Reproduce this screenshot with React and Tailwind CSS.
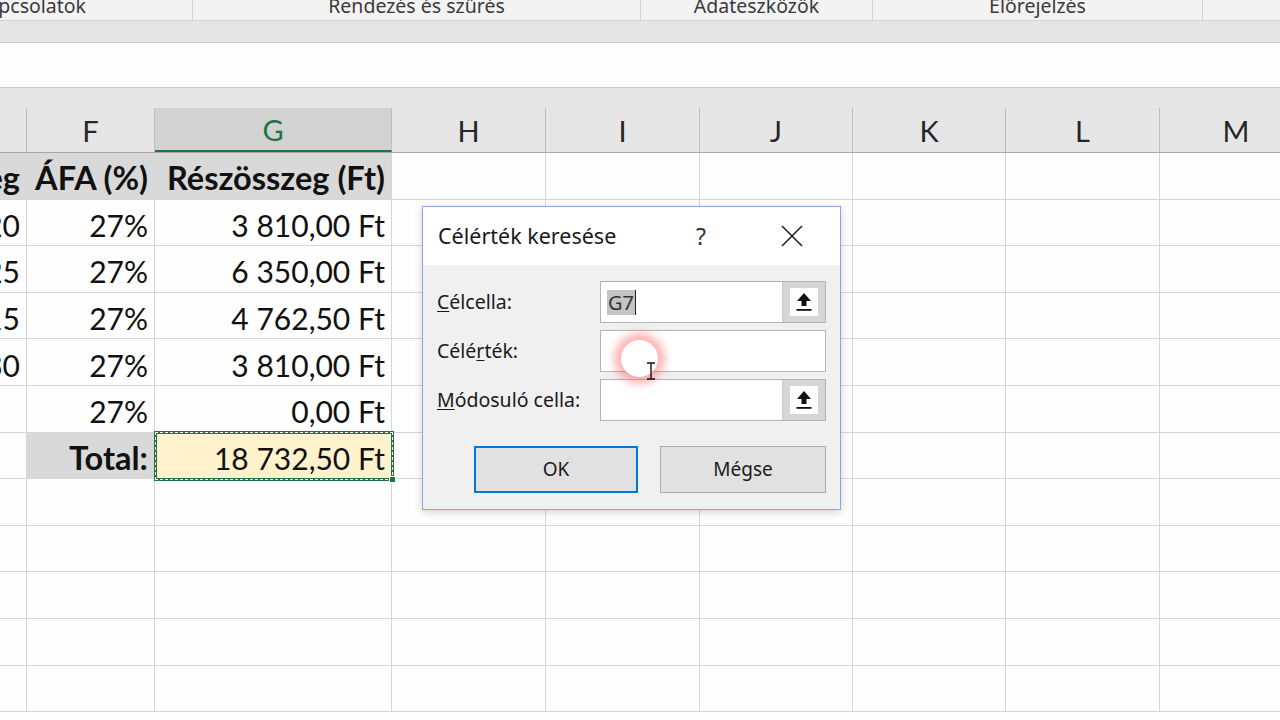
import React from 'react';

const COLS = ['w-[27px]', 'w-[128px]', 'w-[237px]', 'w-[154px]', 'w-[154px]', 'w-[153px]', 'w-[153px]', 'w-[154px]', 'w-[153px]'];
const LETTERS = ['', 'F', 'G', 'H', 'I', 'J', 'K', 'L', 'M'];

const ROWS = [
  [{ t: 'eg', b: 1, gray: 1 }, { t: 'ÁFA (%)', b: 1, gray: 1 }, { t: 'Részösszeg (Ft)', b: 1, gray: 1 }],
  [{ t: '20' }, { t: '27%' }, { t: '3 810,00 Ft' }],
  [{ t: '25' }, { t: '27%' }, { t: '6 350,00 Ft' }],
  [{ t: '15' }, { t: '27%' }, { t: '4 762,50 Ft' }],
  [{ t: '30' }, { t: '27%' }, { t: '3 810,00 Ft' }],
  [{ t: '' }, { t: '27%' }, { t: '0,00 Ft' }],
  [{ t: '' }, { t: 'Total:', b: 1, gray: 1 }, { t: '18 732,50 Ft', yellow: 1 }],
  [], [], [], [], [],
];

const cellFont = { fontFamily: 'Lato, "Open Sans", sans-serif' };
const uiFont = { fontFamily: '"Noto Sans", "Open Sans", sans-serif' };

function UpArrowButton() {
  return (
    <div className="w-[43px] h-full bg-[#d6d6d6] border-l border-[#c8c8c8] flex items-center justify-center">
      <div className="w-[28px] h-[28px] bg-white flex items-center justify-center">
        <svg width="18" height="22" viewBox="0 0 18 22">
          <path d="M9 2 L16 10 H11.5 V15 H6.5 V10 H2 Z" fill="#111" />
          <rect x="1.5" y="18" width="15" height="1.8" fill="#111" />
        </svg>
      </div>
    </div>
  );
}

function Dialog() {
  return (
    <div
      className="absolute left-[422px] top-[206px] w-[419px] h-[304px] bg-[#f0f0f0] border border-[#8aa7d8] shadow-[0_2px_8px_rgba(0,0,0,0.18)] flex flex-col"
      style={uiFont}
    >
      <div className="h-[58px] bg-white flex items-center pl-[15px] text-[21.5px] text-[#1a1a1a]">
        <span className="w-[258px]">Célérték keresése</span>
        <span className="text-[23px] text-[#333]">?</span>
        <svg className="ml-[75px]" width="22" height="22" viewBox="0 0 22 22">
          <path d="M1 1 L21 21 M21 1 L1 21" stroke="#222" strokeWidth="1.6" />
        </svg>
      </div>
      <div className="flex flex-col gap-[7px] pt-[16px] pl-[14px] text-[19.5px] text-[#1a1a1a]">
        <div className="flex items-center h-[42px]">
          <span className="w-[163px]"><span className="underline underline-offset-2">C</span>élcella:</span>
          <div className="w-[226px] h-[42px] bg-white border border-[#b4b4b4] flex">
            <div className="flex-1 flex items-center pl-[6px]">
              <span className="bg-[#c4c4c4] text-[#333] px-[1px] leading-[25px] text-[20px]">G7</span>
              <span className="w-[1px] h-[25px] bg-[#222]" />
            </div>
            <UpArrowButton />
          </div>
        </div>
        <div className="flex items-center h-[42px]">
          <span className="w-[163px]">Célé<span className="underline underline-offset-2">r</span>ték:</span>
          <div className="w-[226px] h-[42px] bg-white border border-[#b4b4b4]" />
        </div>
        <div className="flex items-center h-[42px]">
          <span className="w-[163px] whitespace-nowrap"><span className="underline underline-offset-2">M</span>ódosuló cella:</span>
          <div className="w-[226px] h-[42px] bg-white border border-[#b4b4b4] flex">
            <div className="flex-1" />
            <UpArrowButton />
          </div>
        </div>
      </div>
      <div className="flex gap-[22px] pl-[51px] pt-[25px] text-[19px] text-[#1a1a1a]">
        <button className="w-[164px] h-[47px] bg-[#e1e1e1] border-2 border-[#0078d7] flex items-center justify-center">OK</button>
        <button className="w-[166px] h-[47px] bg-[#e1e1e1] border border-[#adadad] flex items-center justify-center">Mégse</button>
      </div>
    </div>
  );
}

export default function App() {
  return (
    <div className="relative w-[1280px] h-[720px] overflow-hidden bg-[#fdfefd]">
      {/* ribbon group labels */}
      <div className="h-[21px] bg-[#f3f3f3] border-b border-[#d2d2d2] flex text-[19.5px] text-[#3a3a3a] overflow-hidden" style={uiFont}>
        <div className="w-[193px] border-r border-[#d4d4d4] flex justify-end pr-[106px] -mt-[9px] h-[30px] leading-[30px]">
          <span className="whitespace-nowrap">Kapcsolatok</span>
        </div>
        <div className="w-[448px] border-r border-[#d4d4d4] text-center -mt-[9px] h-[30px] leading-[30px]">Rendezés és szűrés</div>
        <div className="w-[232px] border-r border-[#d4d4d4] text-center -mt-[9px] h-[30px] leading-[30px]">Adateszközök</div>
        <div className="w-[330px] border-r border-[#d4d4d4] text-center -mt-[9px] h-[30px] leading-[30px]">Előrejelzés</div>
        <div className="flex-1" />
      </div>
      <div className="h-[22px] bg-[#e6e6e6] border-b border-[#c8c8c8]" />
      <div className="h-[45px] bg-[#fcfdfc] border-b border-[#c8c8c8]" />
      <div className="h-[20px] bg-[#e6e6e6]" />

      {/* column headers */}
      <div className="flex h-[45px] bg-[#e6e6e6] border-b border-[#a8a8a8] text-[29px] text-[#262626]" style={cellFont}>
        {COLS.map((w, i) => (
          <div
            key={i}
            className={`${w} shrink-0 flex items-center justify-center pt-[2px] border-r border-[#bdbdbd] ${
              LETTERS[i] === 'G' ? 'bg-[#d2d2d2] text-[#217346] border-b-2 border-b-[#217346]' : ''
            }`}
          >
            {LETTERS[i]}
          </div>
        ))}
      </div>

      {/* grid */}
      <div className="flex flex-col text-[30px] text-[#111]" style={cellFont}>
        {ROWS.map((row, r) => (
          <div key={r} className="flex h-[46.6px]">
            {COLS.map((w, c) => {
              const cell = row[c] || {};
              const bg = cell.gray ? 'bg-[#d9d9d9]' : cell.yellow ? 'bg-[#fff2cc]' : '';
              const rightBorder = cell.gray && row[c + 1] && row[c + 1].gray ? 'border-r-[#d9d9d9]' : 'border-r-[#d6d6d6]';
              return (
                <div
                  key={c}
                  className={`${w} shrink-0 flex items-center justify-end pr-[6px] pt-[6px] overflow-hidden whitespace-nowrap border-r border-b border-b-[#d6d6d6] ${rightBorder} ${bg} ${
                    cell.b ? 'font-bold text-[32.5px]' : ''
                  }`}
                >
                  <span className="shrink-0">{cell.t}</span>
                </div>
              );
            })}
          </div>
        ))}
      </div>

      {/* copy marquee on total cell */}
      <div className="absolute left-[154px] top-[431px] w-[240px] h-[50px] border-[3px] border-[#217346]">
        <div className="absolute -left-[2px] -top-[2px] -right-[2px] -bottom-[2px] border border-dashed border-white" />
      </div>
      <div className="absolute left-[389px] top-[476px] w-[7px] h-[7px] bg-[#217346] border border-white" />

      <Dialog />

      {/* click ripple + cursor */}
      <div className="absolute left-[621px] top-[340px] w-[37px] h-[37px] rounded-full bg-white shadow-[0_0_9px_7px_rgba(255,90,90,0.45)]" />
      <svg className="absolute left-[645px] top-[362px]" width="12" height="18" viewBox="0 0 12 18">
        <path d="M2 1 H10 M6 1 V17 M2 17 H10" stroke="#111" strokeWidth="1.4" fill="none" />
      </svg>
    </div>
  );
}
